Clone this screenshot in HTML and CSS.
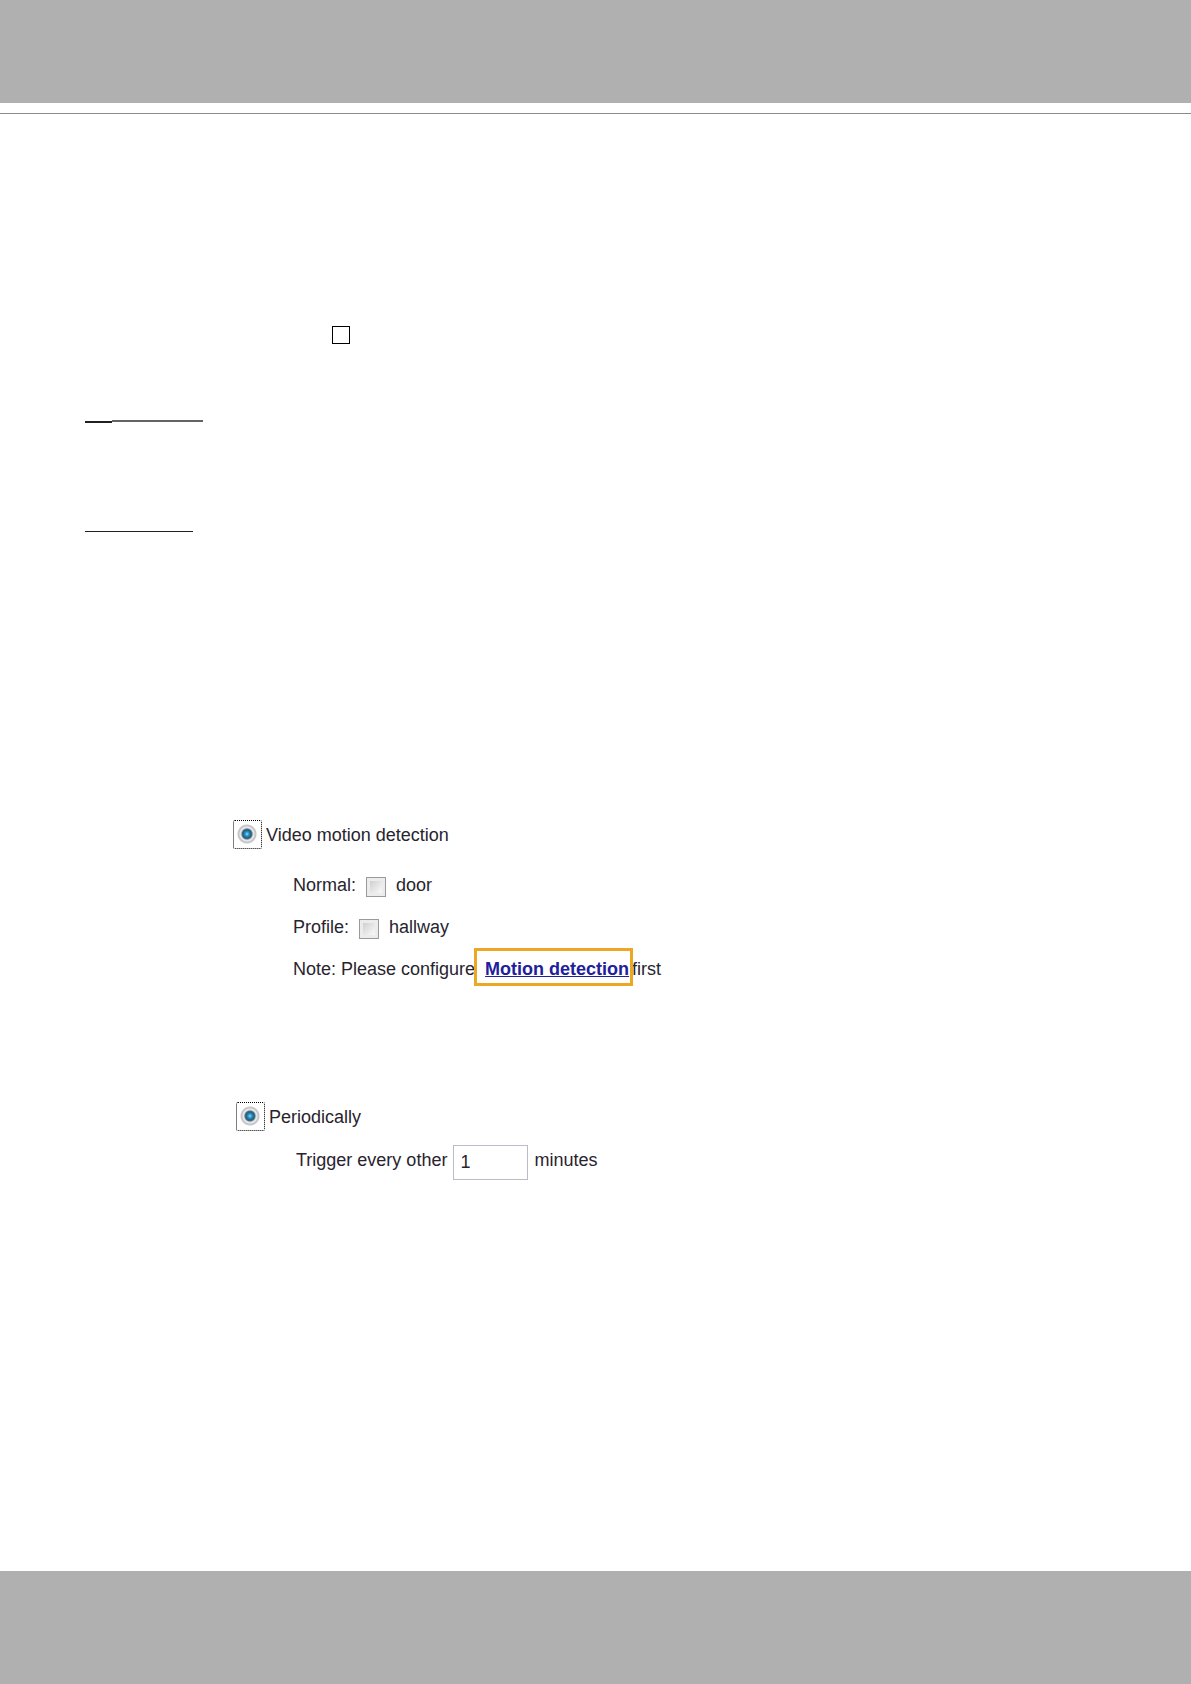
FILE: index.html
```html
<!DOCTYPE html>
<html lang="en">
<head>
    <meta charset="UTF-8">
    <meta name="viewport" content="width=device-width, initial-scale=1.0">
    <title>Event Trigger</title>
    <link rel="stylesheet" href="styles.css">
</head>
<body>
    <header class="page-header"></header>
    <div class="header-rule"></div>

    <main class="content">
        <div class="square"></div>

        <div class="underline">
            <span class="underline-start"></span>
            <span class="underline-end"></span>
        </div>
        <div class="underline-thin"></div>

        <section class="trigger motion">
            <div class="trigger-title">
                <input type="radio" class="radio" name="motion" id="motion" checked>
                <label for="motion">Video motion detection</label>
            </div>
            <div class="options">
                <div class="row">
                    <span>Normal:</span>
                    <input type="checkbox" class="checkbox" id="door">
                    <label for="door">door</label>
                </div>
                <div class="row">
                    <span>Profile:</span>
                    <input type="checkbox" class="checkbox" id="hallway">
                    <label for="hallway">hallway</label>
                </div>
                <p class="row note">
                    <span>Note: Please configure</span>
                    <a href="#" class="motion-link">Motion detection</a>
                    <span>first</span>
                </p>
            </div>
        </section>

        <section class="trigger periodic">
            <div class="trigger-title">
                <input type="radio" class="radio" name="periodic" id="periodic" checked>
                <label for="periodic">Periodically</label>
            </div>
            <div class="options">
                <div class="row interval">
                    <label for="minutes">Trigger every other</label>
                    <input type="text" class="minutes" id="minutes" value="1">
                    <span>minutes</span>
                </div>
            </div>
        </section>
    </main>

    <footer class="page-footer"></footer>
</body>
</html>
```
FILE: styles.css
```css
* {
    margin: 0;
    padding: 0;
    box-sizing: border-box;
}

body {
    font-family: "Liberation Sans", Arial, sans-serif;
    font-size: 18px;
    line-height: 22px;
    color: #28242e;
    background: #fff;
    min-height: 100vh;
    display: flex;
    flex-direction: column;
}

.page-header {
    height: 103px;
    background: #b0b0b0;
}

.header-rule {
    margin-top: 10px;
    border-top: 1px solid #8c8c8c;
}

.content {
    flex-grow: 1;
    padding: 212px 85px 40px;
}

.page-footer {
    height: 113px;
    background: #b0b0b0;
}

.square {
    width: 18px;
    height: 18px;
    margin-left: 247px;
    border: 1px solid #000;
}

.underline {
    display: flex;
    height: 3px;
    margin-top: 76px;
}

.underline-start {
    width: 27px;
    height: 2px;
    align-self: flex-end;
    background: #231f20;
}

.underline-end {
    width: 91px;
    height: 2px;
    background: #636363;
}

.underline-thin {
    width: 108px;
    height: 1px;
    margin-top: 108px;
    background: #231f20;
}

.motion {
    margin: 288px 0 0 148px;
}

.periodic {
    margin: 112px 0 0 151px;
}

.trigger-title {
    display: flex;
    align-items: center;
    gap: 4px;
}

.options {
    padding-left: 60px;
}

.motion .options {
    padding-top: 15px;
}

.periodic .options {
    padding-top: 8px;
}

.row {
    display: flex;
    align-items: center;
    height: 42px;
    gap: 10px;
}

.note {
    gap: 10px;
}

.interval {
    gap: 6px;
}

.radio {
    appearance: none;
    width: 29px;
    height: 29px;
    border: 1px dotted #000;
    border-radius: 2px;
    background: radial-gradient(circle at 13px 13px, #fff 8px, #b5b5b9 9px, transparent 10px);
}

.radio:checked {
    background: radial-gradient(circle at 13px 13px, #8fdcf5 0, #2b94c4 2px, #1b5f88 4px, #52707f 5px, #dcdcdc 6px, #ebebeb 7px, #c4c4c8 8px, #c8c8cc 9px, transparent 10px);
}

.checkbox {
    appearance: none;
    width: 20px;
    height: 20px;
    margin-top: 4px;
    padding: 3px;
    border: 1px solid #9a9a9a;
    background: linear-gradient(135deg, #cfcfcf, #fafafa) content-box, #ececec;
}

.motion-link {
    position: relative;
    margin-right: -7px;
    font-weight: bold;
    color: #20209c;
}

/* highlight frame over the link */
.motion-link::after {
    content: "";
    position: absolute;
    inset: -10px -4px -6px -11px;
    border: 3px solid #eca824;
}

.minutes {
    width: 75px;
    height: 35px;
    margin-top: 4px;
    padding: 0 6px;
    border: 1px solid #b9bdca;
    font: inherit;
    color: inherit;
}
```
